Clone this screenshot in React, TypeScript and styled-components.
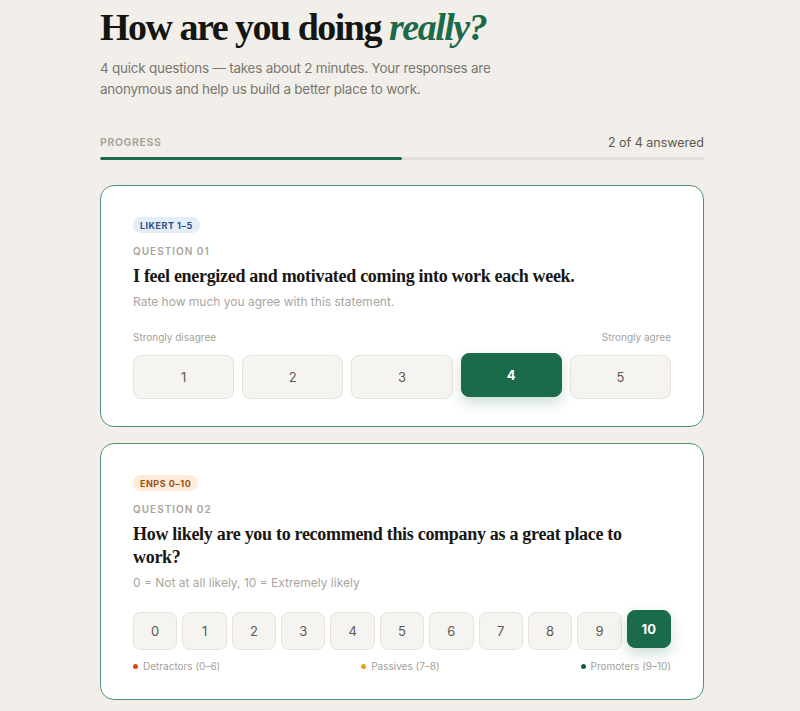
import styled, { createGlobalStyle } from "styled-components";

const GlobalStyle = createGlobalStyle`
  body {
    margin: 0;
    background: #f2efea;
    font-family: Inter, "Noto Sans", sans-serif;
    color: #1a1a1a;
  }
`;

const serif = `"Liberation Serif", "DejaVu Serif", serif`;
const green = "#1b6b4b";

type Tone = "blue" | "amber";

const Page = styled.div`
  padding: 0 96px 40px 100px;
`;

const Title = styled.h1`
  margin: 0;
  padding-top: 4px;
  font-family: ${serif};
  font-size: 38px;
  font-weight: 700;
  letter-spacing: -1.5px;
  line-height: 46px;
  color: #151512;
  em {
    color: ${green};
    font-style: italic;
  }
`;

const Lead = styled.p`
  margin: 8px 0 0;
  max-width: 400px;
  font-size: 13.5px;
  letter-spacing: -0.25px;
  line-height: 21px;
  color: #7a7770;
`;

const ProgressHead = styled.div`
  display: flex;
  justify-content: space-between;
  align-items: center;
  margin-top: 35px;
`;

const ProgressLabel = styled.span`
  font-size: 10.5px;
  font-weight: 700;
  letter-spacing: 0.6px;
  color: #aba79f;
`;

const ProgressCount = styled.span`
  font-size: 12.5px;
  color: #5a5750;
`;

const Track = styled.div`
  margin-top: 7px;
  height: 3px;
  border-radius: 2px;
  background: #e2dfd8;
  overflow: hidden;
`;

const Fill = styled.div`
  height: 100%;
  background: ${green};
  border-radius: 2px;
`;

const Cards = styled.div`
  display: flex;
  flex-direction: column;
  gap: 16px;
  margin-top: 25px;
`;

const Card = styled.section`
  background: #fff;
  border: 1px solid #4f9277;
  border-radius: 14px;
  padding: 31px 32px 27px;
`;

const BadgeRow = styled.div`
  display: flex;
`;

const Badge = styled.span<{ $tone: Tone }>`
  padding: 3px 7px 2px;
  border-radius: 10px;
  font-size: 9px;
  font-weight: 700;
  letter-spacing: 0.5px;
  line-height: 11px;
  background: ${({ $tone }) => ($tone === "blue" ? "#e4eef8" : "#fcecd8")};
  color: ${({ $tone }) => ($tone === "blue" ? "#2d4e86" : "#9a5318")};
`;

const Eyebrow = styled.div`
  margin-top: 12px;
  font-size: 10px;
  font-weight: 600;
  letter-spacing: 1px;
  color: #a9a59d;
`;

const Question = styled.h2`
  margin: 8px 0 0;
  font-family: ${serif};
  font-size: 18px;
  font-weight: 700;
  line-height: 23px;
  color: #181713;
  letter-spacing: -0.3px;
`;

const Hint = styled.div`
  margin-top: 6px;
  font-size: 12px;
  color: #aaa69e;
`;

const Ends = styled.div`
  display: flex;
  justify-content: space-between;
  margin-top: 22px;
  font-size: 10px;
  color: #a4a098;
`;

const Scale = styled.div<{ $count: number; $gap: number }>`
  display: grid;
  grid-template-columns: repeat(${({ $count }) => $count}, 1fr);
  gap: ${({ $gap }) => $gap}px;
  margin-top: ${({ $count }) => ($count > 5 ? 22 : 12)}px;
`;

const Choice = styled.button<{ $active: boolean; $h: number }>`
  height: ${({ $h }) => $h}px;
  border-radius: 8px;
  border: 1px solid ${({ $active }) => ($active ? green : "#e7e3dc")};
  background: ${({ $active }) => ($active ? green : "#f6f4f0")};
  color: ${({ $active }) => ($active ? "#fff" : "#5e5b55")};
  font-family: Inter, sans-serif;
  font-size: 13px;
  font-weight: ${({ $active }) => ($active ? 700 : 400)};
  cursor: pointer;
  transform: translateY(${({ $active }) => ($active ? -2 : 0)}px);
  box-shadow: ${({ $active }) =>
    $active ? "0 6px 14px rgba(27, 107, 75, 0.22)" : "none"};
`;

const Legend = styled.div`
  display: flex;
  justify-content: space-between;
  margin-top: 10px;
  font-size: 10px;
  color: #a4a098;
`;

const LegendItem = styled.span<{ $dot: string }>`
  display: flex;
  align-items: center;
  gap: 5px;
  &::before {
    content: "";
    width: 5px;
    height: 5px;
    border-radius: 50%;
    background: ${({ $dot }) => $dot};
  }
`;

const App = () => {
  const likert = [1, 2, 3, 4, 5];
  const enps = Array.from({ length: 11 }, (_, i) => i);

  return (
    <Page>
      <GlobalStyle />
      <Title>
        How are you doing <em>really?</em>
      </Title>
      <Lead>
        4 quick questions — takes about 2 minutes. Your responses are
        anonymous and help us build a better place to work.
      </Lead>

      <ProgressHead>
        <ProgressLabel>PROGRESS</ProgressLabel>
        <ProgressCount>2 of 4 answered</ProgressCount>
      </ProgressHead>
      <Track>
        <Fill style={{ width: `${(2 / 4) * 100}%` }} />
      </Track>

      <Cards>
        <Card>
          <BadgeRow>
            <Badge $tone="blue">LIKERT 1–5</Badge>
          </BadgeRow>
          <Eyebrow>QUESTION 01</Eyebrow>
          <Question>I feel energized and motivated coming into work each week.</Question>
          <Hint>Rate how much you agree with this statement.</Hint>
          <Ends>
            <span>Strongly disagree</span>
            <span>Strongly agree</span>
          </Ends>
          <Scale $count={5} $gap={8}>
            {likert.map((n) => (
              <Choice key={n} $active={n === 4} $h={44}>
                {n}
              </Choice>
            ))}
          </Scale>
        </Card>

        <Card>
          <BadgeRow>
            <Badge $tone="amber">ENPS 0–10</Badge>
          </BadgeRow>
          <Eyebrow>QUESTION 02</Eyebrow>
          <Question>
            How likely are you to recommend this company as a great place to
            work?
          </Question>
          <Hint>0 = Not at all likely, 10 = Extremely likely</Hint>
          <Scale $count={11} $gap={5}>
            {enps.map((n) => (
              <Choice key={n} $active={n === 10} $h={38}>
                {n}
              </Choice>
            ))}
          </Scale>
          <Legend>
            <LegendItem $dot="#d9480f">Detractors (0–6)</LegendItem>
            <LegendItem $dot="#e8a317">Passives (7–8)</LegendItem>
            <LegendItem $dot="#1b5e40">Promoters (9–10)</LegendItem>
          </Legend>
        </Card>
      </Cards>
    </Page>
  );
};

export default App;
